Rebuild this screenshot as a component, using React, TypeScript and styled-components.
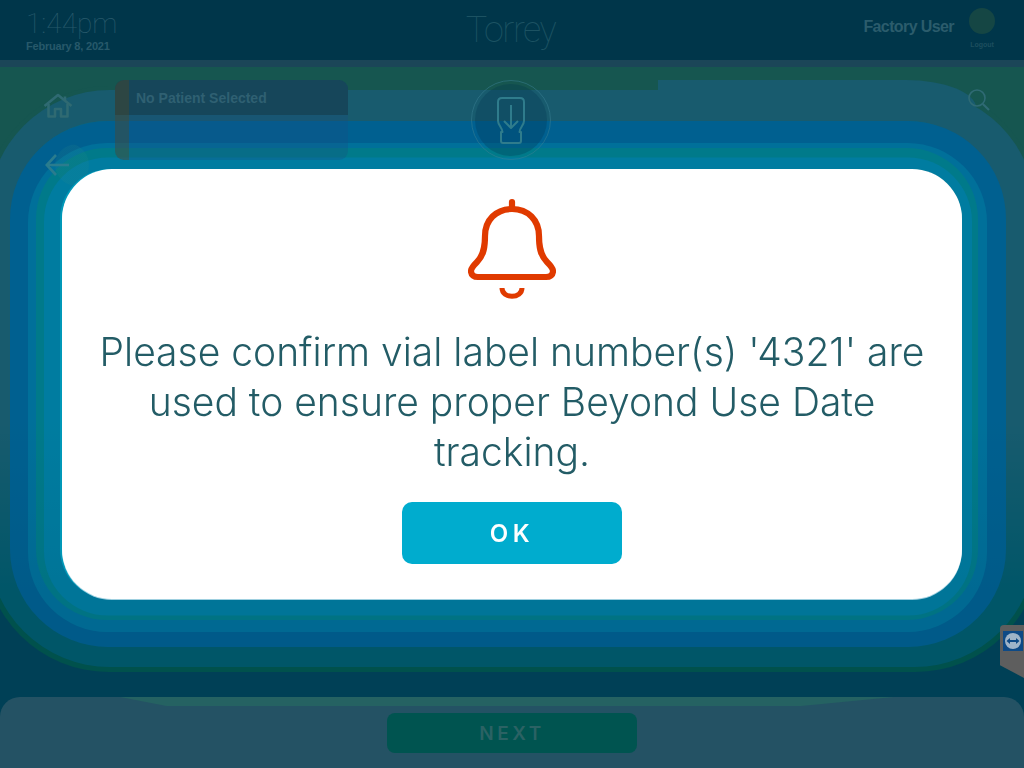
import React from "react";
import styled, { createGlobalStyle, css } from "styled-components";

const GlobalStyle = createGlobalStyle`
  html, body {
    margin: 0;
    padding: 0;
    background: #004054;
  }
  * {
    box-sizing: border-box;
  }
`;

const modalFrame = css`
  position: absolute;
  left: 62px;
  top: 169px;
  width: 900px;
  height: 430px;
  border-radius: 50px;
`;

const App = () => {
  return (
    <>
      <GlobalStyle />
      <Screen>
        <ModalGlow />
        <BottomTint />

        <Header>
          <Clock>
            <Time>1:44pm</Time>
            <DateText>February 8, 2021</DateText>
          </Clock>
          <Title>Torrey</Title>
          <UserArea>
            <UserName>Factory User</UserName>
            <LogoutBox>
              <Avatar />
              <LogoutText>Logout</LogoutText>
            </LogoutBox>
          </UserArea>
        </Header>

        <Nav>
          <LeftRail>
            <svg width="30" height="25" viewBox="0 0 30 25" fill="none" stroke="#2f6a72" strokeWidth="2.6" strokeLinejoin="round">
              <path d="M1.5 13 L15 2 L28.5 13" />
              <path d="M22 7 V3.5" />
              <path d="M5.5 11 V23.5 H12 V16 H18 V23.5 H24.5 V11" />
            </svg>
            <BackButton>
              <svg width="24" height="22" viewBox="0 0 24 22" fill="none" stroke="#2a7c8e" strokeWidth="2.6">
                <path d="M11 1 L1.8 11 L11 21" />
                <path d="M2 11 H24" />
              </svg>
            </BackButton>
          </LeftRail>

          <PatientBox>
            <PatientHeader>No Patient Selected</PatientHeader>
            <PatientStripe />
          </PatientBox>

          <StepBadge>
            <StepInner>
              <svg width="28" height="47" viewBox="0 0 28 47" fill="none" stroke="#2f7c8c" strokeWidth="2" strokeLinejoin="round">
                <path d="M5 1 H23 C25.5 1 27 2.5 27 5 V24 C27 28 22.5 31 22.5 35 H24 V44 C24 45.5 23.4 46 22 46 H6 C4.6 46 4 45.5 4 44 V35 H5.5 C5.5 31 1 28 1 24 V5 C1 2.5 2.5 1 5 1 Z" />
                <path d="M14 8 V31" />
                <path d="M7 24 L14 31 L21 24" />
              </svg>
            </StepInner>
          </StepBadge>

          <SearchGlow>
            <SearchIcon width="22" height="22" viewBox="0 0 22 22" fill="none" stroke="#2f6a74" strokeWidth="1.6">
              <circle cx="9" cy="9" r="8" />
              <path d="M14.8 15 L21 21" strokeWidth="2.2" />
            </SearchIcon>
          </SearchGlow>
        </Nav>

        <Footer>
          <FooterStrip />
          <NextButton>NEXT</NextButton>
        </Footer>

        <Modal>
          <svg width="88" height="102" viewBox="28 17 88 102" fill="none" stroke="#e03a00" strokeWidth="6.2" strokeLinecap="round" strokeLinejoin="round">
            <path d="M72 21 V28" />
            <path d="M72 28 C56 28 45 39 45 55 C45 65 44 74 37 81 C34 84 31 87 31 90 C31 94 34 96 38 96 H106 C110 96 113 94 113 90 C113 87 110 84 107 81 C100 74 99 65 99 55 C99 39 88 28 72 28 Z" />
            <path d="M62 107 C62 118 82 118 82 107" strokeWidth="5" strokeLinecap="butt" />
          </svg>
          <Message>
            Please confirm vial label number(s) '4321' are used to ensure proper Beyond Use Date tracking.
          </Message>
          <OkButton>OK</OkButton>
        </Modal>

        <RemoteTab>
          <svg width="20" height="20" viewBox="0 0 20 20">
            <rect width="20" height="20" fill="#0e4a86" />
            <circle cx="10" cy="10" r="8" fill="#9fb4c8" />
            <path d="M3.5 10 L7 7 V9 H13 V7 L16.5 10 L13 13 V11 H7 V13 Z" fill="#0e4a86" />
          </svg>
        </RemoteTab>
      </Screen>
    </>
  );
};

const Screen = styled.div`
  position: relative;
  isolation: isolate;
  display: flex;
  flex-direction: column;
  width: 1024px;
  height: 768px;
  overflow: hidden;
  background: linear-gradient(#165650 0 50%, #00445a 50% 100%);
`;

const ModalGlow = styled.div`
  ${modalFrame}
  box-shadow:
    -4px 2.5px 0 14px #007ca0,
    -5px 0 0 21px #007a8a,
    -4.5px 3.5px 0 29.5px #00709a,
    -4px 0 0 48px #006090,
    -5px -3px 0 45px #0a687e,
    0 -5.5px 0 73.5px #185b6e,
    0 -5px 0 78px #165650;
`;

const BottomTint = styled.div`
  position: absolute;
  inset: 0;
  mix-blend-mode: multiply;
  background: linear-gradient(#ffffff 0 420px, #00f0f2 590px, #00f0f2 100%);
`;

const Header = styled.header`
  position: relative;
  z-index: 1;
  display: grid;
  grid-template-columns: 1fr 1fr 1fr;
  align-items: start;
  flex: none;
  height: 60px;
  padding: 0 29px 0 26px;
  background: #00364a;
`;

const Clock = styled.div`
  display: flex;
  flex-direction: column;
`;

const Time = styled.div`
  margin-top: 7px;
  font-family: Roboto, sans-serif;
  font-weight: 100;
  font-size: 28px;
  line-height: 33px;
  color: #27596a;
`;

const DateText = styled.div`
  font-family: "Liberation Sans", sans-serif;
  font-weight: 700;
  font-size: 11px;
  line-height: 13px;
  letter-spacing: -0.2px;
  color: #27596a;
`;

const Title = styled.div`
  margin-top: 8px;
  text-align: center;
  font-family: Roboto, sans-serif;
  font-weight: 100;
  font-size: 36px;
  line-height: 44px;
  letter-spacing: -1.5px;
  color: #1c5262;
`;

const UserArea = styled.div`
  display: flex;
  justify-content: flex-end;
  gap: 15px;
`;

const UserName = styled.div`
  margin-top: 18px;
  font-family: "Liberation Sans", sans-serif;
  font-weight: 700;
  font-size: 16px;
  line-height: 18px;
  letter-spacing: -0.6px;
  color: #2b5c6c;
`;

const LogoutBox = styled.div`
  display: flex;
  flex-direction: column;
  align-items: center;
  margin-top: 8px;
`;

const Avatar = styled.div`
  width: 26px;
  height: 26px;
  border-radius: 50%;
  background: #154644;
`;

const LogoutText = styled.div`
  margin-top: 6px;
  font-family: "Liberation Sans", sans-serif;
  font-weight: 700;
  font-size: 7px;
  line-height: 9px;
  color: #1d4e5e;
`;

const Nav = styled.nav`
  position: relative;
  z-index: 1;
  display: flex;
  align-items: flex-start;
  flex: 1;
  padding: 13px 0 0 43px;
  border-top: 7px solid #1b4658;
`;

const LeftRail = styled.div`
  display: flex;
  flex-direction: column;
  width: 72px;
  padding-top: 13px;
`;

const BackButton = styled.div`
  display: flex;
  align-items: center;
  justify-content: flex-start;
  width: 44px;
  height: 44px;
  margin: 25px 0 0 2px;
  border-radius: 50%;
  background: radial-gradient(circle at 70% 50%, rgba(40, 140, 140, 0.16) 0 20px, transparent 21px);
`;

const PatientBox = styled.div`
  position: relative;
  width: 233px;
  height: 80px;
  border-radius: 9px;
  overflow: hidden;
  background: rgba(24, 76, 130, 0.28);
`;

const PatientHeader = styled.div`
  height: 35px;
  padding: 9px 0 0 21px;
  background: #16465a;
  font-family: "Liberation Sans", sans-serif;
  font-weight: 700;
  font-size: 14px;
  line-height: 18px;
  color: #2f6072;
`;

const PatientStripe = styled.div`
  position: absolute;
  left: 0;
  top: 0;
  bottom: 0;
  width: 14px;
  background: rgba(96, 70, 20, 0.32);
`;

const StepBadge = styled.div`
  display: flex;
  align-items: center;
  justify-content: center;
  width: 80px;
  height: 80px;
  margin-left: 123px;
  border-radius: 50%;
  border: 1px solid rgba(60, 130, 150, 0.5);
`;

const StepInner = styled.div`
  display: flex;
  align-items: center;
  justify-content: center;
  width: 72px;
  height: 72px;
  border-radius: 50%;
  background: rgba(0, 50, 80, 0.28);
`;

const SearchGlow = styled.div`
  display: flex;
  justify-content: flex-end;
  width: 318px;
  height: 34px;
  margin-left: 107px;
  border-radius: 0 70px 0 0 / 0 28px 0 0;
  background: #185b6e;
`;

const SearchIcon = styled.svg`
  flex: none;
  margin: 9px -14px 0 0;
`;

const Footer = styled.footer`
  position: relative;
  z-index: 1;
  display: flex;
  justify-content: center;
  flex: none;
  height: 71px;
  padding-top: 16px;
  border-radius: 20px 20px 0 0;
  background: #245264;
`;

const FooterStrip = styled.div`
  position: absolute;
  left: 120px;
  right: 130px;
  top: 0;
  height: 9px;
  background: #256262;
  clip-path: polygon(0 0, 100% 0, 88% 100%, 6% 100%);
`;

const NextButton = styled.div`
  display: flex;
  align-items: center;
  justify-content: center;
  width: 250px;
  height: 40px;
  border-radius: 8px;
  background: #005450;
  font-family: Inter, sans-serif;
  font-weight: 600;
  font-size: 19px;
  letter-spacing: 3.5px;
  color: #2b6264;
`;

const Modal = styled.div`
  ${modalFrame}
  z-index: 2;
  display: flex;
  flex-direction: column;
  align-items: center;
  padding-top: 29px;
  background: #ffffff;
  box-shadow: 0 1px 0 0 #9fd0e0, -2px 0 0 0 #0098b8;
`;

const Message = styled.div`
  width: 830px;
  margin-top: 27px;
  text-align: center;
  font-family: Inter, sans-serif;
  font-weight: 300;
  font-size: 39px;
  line-height: 50px;
  color: #235c66;
`;

const OkButton = styled.div`
  display: flex;
  align-items: center;
  justify-content: center;
  width: 220px;
  height: 62px;
  margin-top: 25px;
  border-radius: 10px;
  background: #00acce;
  font-family: Inter, sans-serif;
  font-weight: 600;
  font-size: 24px;
  letter-spacing: 4.5px;
  color: #ffffff;
`;

const RemoteTab = styled.div`
  position: absolute;
  z-index: 3;
  right: 0;
  top: 625px;
  width: 24px;
  height: 53px;
  padding: 6px 0 0 3px;
  border-radius: 4px 0 0 0;
  background: #5e5e5e;
  clip-path: polygon(0 0, 100% 0, 100% 100%, 0 76%);
`;

export default App;
